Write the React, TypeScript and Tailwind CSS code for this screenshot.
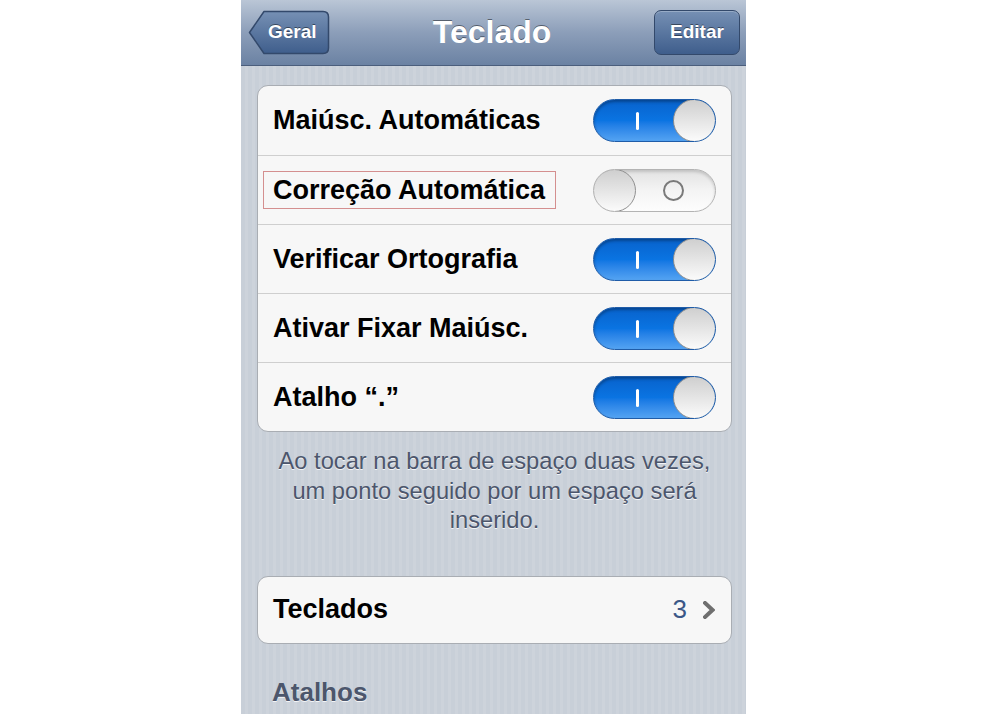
import React from "react";

const rows = [
  { label: "Maiúsc. Automáticas", on: true },
  { label: "Correção Automática", on: false, marked: true },
  { label: "Verificar Ortografia", on: true },
  { label: "Ativar Fixar Maiúsc.", on: true },
  { label: "Atalho “.”", on: true },
];

function Toggle({ on }: { on: boolean }) {
  if (on) {
    return (
      <div className="relative h-[43px] w-[123px] shrink-0 overflow-hidden rounded-full border border-[#1f5ca8] bg-gradient-to-b from-[#0862cc] via-[#0a74e2] to-[#53a3f2] shadow-[inset_0_2px_3px_rgba(0,0,0,0.3)]">
        <span className="absolute left-[42px] top-[12px] h-[18px] w-[3px] rounded-sm bg-white" />
        <span className="absolute right-[-1px] top-[-1px] h-[43px] w-[43px] rounded-full border border-[#8f8f8f] bg-gradient-to-b from-[#cfcfcf] to-[#fbfbfb]" />
      </div>
    );
  }
  return (
    <div className="relative h-[43px] w-[123px] shrink-0 overflow-hidden rounded-full border border-[#b3b3b3] bg-gradient-to-b from-[#e2e2e2] via-[#f4f4f4] to-[#fdfdfd] shadow-[inset_0_2px_3px_rgba(0,0,0,0.15)]">
      <span className="absolute left-[69px] top-[10px] h-[21px] w-[21px] rounded-full border-[2.5px] border-[#7a7a7a]" />
      <span className="absolute left-[-1px] top-[-1px] h-[43px] w-[43px] rounded-full border border-[#8f8f8f] bg-gradient-to-b from-[#cfcfcf] to-[#fbfbfb]" />
    </div>
  );
}

function BackButton() {
  return (
    <div className="relative h-[45px] w-[82px]">
      <svg className="absolute inset-0" width="82" height="45" viewBox="0 0 82 45">
        <defs>
          <linearGradient id="bb" x1="0" y1="0" x2="0" y2="1">
            <stop offset="0" stopColor="#7690b4" />
            <stop offset="1" stopColor="#3f5e8c" />
          </linearGradient>
        </defs>
        <path
          d="M1.5 22.5 L16 1.5 H75 Q80.5 1.5 80.5 7 V38 Q80.5 43.5 75 43.5 H16 Z"
          fill="url(#bb)"
          stroke="#33496b"
          strokeWidth="1.5"
          strokeLinejoin="round"
        />
      </svg>
      <span className="absolute inset-0 flex items-center pl-[20px] text-[19px] font-bold text-white [text-shadow:0_-1px_0_rgba(0,0,0,0.45)]">
        Geral
      </span>
    </div>
  );
}

export default function App() {
  return (
    <div className="h-[714px] w-[984px] overflow-hidden bg-white font-['Liberation_Sans',Arial,sans-serif]">
      <div className="ml-[241px] flex h-full w-[505px] flex-col bg-[repeating-linear-gradient(90deg,#c8cfd8_0px,#c8cfd8_4px,#cdd3db_4px,#cdd3db_7px)]">
        {/* nav bar */}
        <div className="flex h-[66px] shrink-0 items-center justify-between border-b border-[#4b5e7c] bg-gradient-to-b from-[#bac6d6] via-[#8c9eb9] to-[#6b82a3] pl-[7px] pr-[6px]">
          <BackButton />
          <span className="-mt-[2px] text-[32px] font-bold text-white [text-shadow:0_-1px_0_rgba(0,0,0,0.45)]">
            Teclado
          </span>
          <div className="flex h-[45px] w-[86px] items-center justify-center rounded-[7px] border border-[#33496b] bg-gradient-to-b from-[#7690b4] to-[#3f5e8c] text-[19px] font-bold text-white shadow-[inset_0_1px_0_rgba(255,255,255,0.25)] [text-shadow:0_-1px_0_rgba(0,0,0,0.45)]">
            Editar
          </div>
        </div>

        <div className="flex flex-col pl-[16px] pr-[14px] pt-[19px]">
          {/* switches */}
          <div className="overflow-hidden rounded-[11px] border border-[#a9adb3] bg-[#f7f7f7]">
            {rows.map((r, i) => (
              <div
                key={r.label}
                className={`flex h-[69px] items-center justify-between pl-[15px] pr-[15px] ${i > 0 ? "border-t border-[#cfcfcf]" : ""}`}
              >
                {r.marked ? (
                  <span className="-ml-[10px] flex h-[38px] items-center border border-[#d48f8f] pl-[9px] pr-[10px] text-[27px] font-bold text-black">
                    {r.label}
                  </span>
                ) : (
                  <span className="text-[27px] font-bold text-black">{r.label}</span>
                )}
                <Toggle on={r.on} />
              </div>
            ))}
          </div>

          <p className="mt-[15px] px-[16px] text-center text-[23.7px] leading-[29.5px] text-[#4c566c] [text-shadow:0_1px_0_rgba(255,255,255,0.8)]">
            Ao tocar na barra de espaço duas vezes, um ponto seguido por um espaço será inserido.
          </p>

          {/* keyboards */}
          <div className="mt-[40px] flex h-[68px] items-center justify-between rounded-[11px] border border-[#a9adb3] bg-[#f7f7f7] pl-[15px] pr-[16px]">
            <span className="text-[27px] font-bold text-black">Teclados</span>
            <div className="flex items-center gap-[16px]">
              <span className="text-[26px] text-[#3b5787]">3</span>
              <svg width="12" height="18" viewBox="0 0 12 18">
                <path d="M2 2 L9.5 9 L2 16" fill="none" stroke="#6f6f6f" strokeWidth="4" strokeLinecap="square" />
              </svg>
            </div>
          </div>

          <div className="mt-[33px] pl-[15px] text-[26px] font-bold leading-[30px] text-[#4c566c] [text-shadow:0_1px_0_rgba(255,255,255,0.8)]">
            Atalhos
          </div>
        </div>
      </div>
    </div>
  );
}
